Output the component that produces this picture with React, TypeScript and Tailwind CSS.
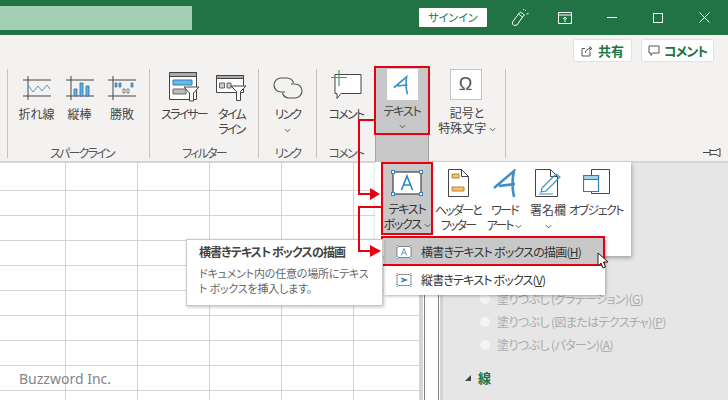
import type { ReactNode } from 'react'

const rows = Array.from({ length: 10 })
const cols = [66, 72, 72, 72, 72, 66]

function TextBoxIcon({ className, vertical }: { className: string; vertical?: boolean }) {
  return (
    <svg viewBox="0 0 32 26" className={className} fill="none">
      <rect x="2" y="2" width="28" height="22" fill="#fff" stroke="#444" strokeWidth="1.2" />
      {[[2, 2], [30, 2], [2, 24], [30, 24]].map(([x, y]) => (
        <rect key={`${x}-${y}`} x={x - 1.5} y={y - 1.5} width="3" height="3" fill="#fff" stroke="#2e88c4" strokeWidth="1" />
      ))}
      {vertical ? (
        <path d="M10 9l11 4-11 4M12 13h6" stroke="#2e88c4" strokeWidth="2.4" />
      ) : (
        <path d="M10.500 20l5.500-14 5.500 14M12.500 15h7" stroke="#2e88c4" strokeWidth="1.600" />
      )}
    </svg>
  )
}

function Chevron() {
  return (
    <svg viewBox="0 0 8 5" className="inline-block w-[7px] h-[5px]" fill="none">
      <path d="M1 1l3 3 3-3" stroke="#444" strokeWidth="1" />
    </svg>
  )
}

// kana in the reference is set much tighter than Noto's
function Kana({ children }: { children: ReactNode }) {
  return <span className="tracking-[-1.8px]">{children}</span>
}

function RibbonButton({
  width,
  icon,
  lines,
}: {
  width: number
  icon: ReactNode
  lines: ReactNode[]
}) {
  return (
    <div className="flex flex-col items-center shrink-0" style={{ width }}>
      <div className="h-[37px] w-full flex items-center justify-center">{icon}</div>
      {lines.map((l, i) => (
        <div key={i} className="leading-[15px] whitespace-nowrap">
          {l}
        </div>
      ))}
    </div>
  )
}

function Group({
  width,
  label,
  children,
  className = '',
}: {
  width: number
  label: string
  children: ReactNode
  className?: string
}) {
  return (
    <div className={`h-[89px] border-r border-[#c4c4c4] shrink-0 ${className}`} style={{ width }}>
      <div className="h-[77px] flex">{children}</div>
      <div className="text-center leading-[14px] text-[#555]">
        <Kana>{label}</Kana>
      </div>
    </div>
  )
}

function Radio({ label, hot }: { label: string; hot: string }) {
  return (
    <div className="h-[23px] flex items-center gap-[7px]">
      <span className="w-[10px] h-[10px] rounded-full bg-[#f4f4f4]" />
      <span className="tracking-[-0.6px]">
        {label}(<span className="underline">{hot}</span>)
      </span>
    </div>
  )
}

const sparkAxes = (
  <>
    <path d="M5 0v24M0 4h28M0 20h28" stroke="#444" strokeWidth="1" />
  </>
)

export default function App() {
  return (
    <div className="relative w-[728px] h-[400px] overflow-hidden flex flex-col bg-white text-[12px] text-[#444] font-['Noto_Sans_CJK_JP',sans-serif] [font-feature-settings:'palt']">
      {/* Title bar */}
      <div className="h-[35px] bg-[#217346] flex items-center shrink-0">
        <div className="w-[192px] h-[24px] bg-[#a3cfb4]" />
        <div className="ml-[227px] w-[68px] h-[19px] bg-white rounded-[1px] text-[11px] leading-[19px] text-center text-[#217346]">
          サインイン
        </div>
        <svg viewBox="0 0 18 18" className="ml-[24px] w-[18px] h-[18px]" fill="none" stroke="#fff" strokeWidth="1">
          <path d="M1.5 13l6-8 4 3-5.5 8-3 .5-1.5-1.5zM7.5 5l2-2 4 3-2 2M14 2l1-1M15.5 5l2-.5M12.5 1l.5-1" />
        </svg>
        <svg viewBox="0 0 14 12" className="ml-[29px] w-[14px] h-[12px]" fill="none" stroke="#fff" strokeWidth="1">
          <path d="M.5.5h13v11H.5zM.5 3h13M7 10V5M5 7l2-2 2 2" />
        </svg>
        <div className="ml-[35px] w-[10px] h-px bg-white" />
        <div className="ml-[36px] w-[10px] h-[10px] border border-white" />
        <svg viewBox="0 0 11 11" className="ml-[36px] w-[11px] h-[11px]" stroke="#fff" strokeWidth="1">
          <path d="M.5.5l10 10M10.5.5l-10 10" />
        </svg>
      </div>

      {/* Ribbon */}
      <div className="relative h-[128px] shrink-0 bg-[#f3f2f1] border-b-[2px] border-[#d4d4d4]">
        <div className="h-[34px] flex justify-end items-start gap-[9px] pt-[4px] pr-[14px]">
          <div className="w-[59px] h-[23px] bg-white border border-[#e4e2e0] rounded-[2px] flex items-center justify-center gap-[5px] font-bold text-[13px] text-[#217346]">
            <svg viewBox="0 0 12 12" className="w-[12px] h-[12px]" fill="none" stroke="#555" strokeWidth="1">
              <path d="M9 6.5v4.5H1V3.5h3M4.5 8c0-3 2-4.5 5-4.5M8 1.5l3 2-3 2" />
            </svg>
            共有
          </div>
          <div className="w-[73px] h-[23px] bg-white border border-[#e4e2e0] rounded-[2px] flex items-center justify-center gap-[4px] font-bold text-[13px] text-[#217346]">
            <svg viewBox="0 0 12 12" className="w-[12px] h-[12px]" fill="none" stroke="#555" strokeWidth="1">
              <path d="M1 1h10v7H4.5L3 10.500V8H1z" />
            </svg>
            <span className="tracking-[-1px]">コメント</span>
          </div>
        </div>
        <div className="flex pl-[7px]">
          <Group width={143} label="スパークライン" className="border-l pl-[7px]">
            <RibbonButton
              width={43}
              lines={['折れ線']}
              icon={
                <svg viewBox="0 0 28 24" className="w-[28px] h-[24px]" fill="none">
                  {sparkAxes}
                  <path d="M5 9l5 7 5-6 4 5 5-6 3 4" stroke="#4a9cc9" strokeWidth="1" />
                </svg>
              }
            />
            <RibbonButton
              width={43}
              lines={['縦棒']}
              icon={
                <svg viewBox="0 0 28 24" className="w-[28px] h-[24px]">
                  {sparkAxes}
                  <path d="M8 13h3v7H8zM14 7h3v13h-3zM20 10h3v10h-3z" fill="#5fb2e6" stroke="#2b6f9e" strokeWidth=".8" />
                </svg>
              }
            />
            <RibbonButton
              width={42}
              lines={['勝敗']}
              icon={
                <svg viewBox="0 0 28 24" className="w-[28px] h-[24px]">
                  {sparkAxes}
                  <path d="M7 7h2v4H7zM11 7h2v4h-2zM23 7h2v4h-2z" fill="#5fb2e6" stroke="#2b6f9e" strokeWidth=".7" />
                  <path d="M15 13h2v4h-2zM19 13h2v4h-2z" fill="#fff" stroke="#555" strokeWidth=".7" />
                </svg>
              }
            />
          </Group>
          <Group width={109} label="フィルター">
            <div className="w-[10px] shrink-0" />
            <RibbonButton
              width={48}
              lines={[<Kana key="s">スライサー</Kana>]}
              icon={
                <svg viewBox="0 0 31 31" className="w-[31px] h-[31px]">
                  <path d="M.5.5h27v27H.5z" fill="#fff" stroke="#444" />
                  <path d="M.5.5h27v4H.5z" fill="#aaa" stroke="#444" />
                  <path d="M4 8h19v5H4z" fill="#6cb6e8" stroke="#2b7fb5" />
                  <path d="M4 17h13v5H4z" fill="#bbb" stroke="#666" />
                  <path d="M15 15h15l-5.500 6v8h-4v-8z" fill="#fff" stroke="#444" />
                </svg>
              }
            />
            <RibbonButton
              width={47}
              lines={[<Kana key="t">タイム</Kana>, <Kana key="l">ライン</Kana>]}
              icon={
                <svg viewBox="0 0 31 26" className="w-[31px] h-[26px]">
                  <path d="M.5.5h27v17H.5z" fill="#fff" stroke="#444" />
                  <path d="M.5.5h27v3H.5z" fill="#aaa" stroke="#444" />
                  <path d="M3.500 8h5v5h-5zM11 8h4v5h-4z" fill="#ccc" stroke="#666" />
                  <path d="M15 11h15l-5.500 5.500v9h-4v-9z" fill="#fff" stroke="#444" />
                </svg>
              }
            />
          </Group>
          <Group width={58} label="リンク">
            <RibbonButton
              width={57}
              lines={[<Kana key="r">リンク</Kana>, <Chevron key="c" />]}
              icon={
                <svg viewBox="0 0 30 22" className="w-[30px] h-[22px]" fill="none" stroke="#555" strokeWidth="1.200">
                  <path d="M12 15H8a7 7 0 010-14h6a7 7 0 016.500 5" />
                  <path d="M18 7h4a7 7 0 010 14h-6a7 7 0 01-6.500-5" />
                </svg>
              }
            />
          </Group>
          <div className="h-[89px] w-[58px] shrink-0">
            <div className="h-[77px] flex">
              <RibbonButton
                width={58}
                lines={[<Kana key="k">コメント</Kana>]}
                icon={
                  <svg viewBox="0 0 32 30" className="w-[32px] h-[30px] -mt-[6px]" fill="none">
                    <path d="M5 4.500h26v19H11l-4 5v-5H5z" fill="#fff" stroke="#444" />
                    <path d="M9 0v16M1 7.500h16" stroke="#4c9a58" strokeWidth="1.200" />
                  </svg>
                }
              />
            </div>
            <div className="text-center leading-[14px] text-[#555]">
              <Kana>コメント</Kana>
            </div>
          </div>

          {/* active Text button, grey down to the ribbon edge */}
          <div className="relative w-[54px] h-[96px] -mt-[2px] shrink-0 bg-[#c8c8c8] border-x border-[#a4a4a4] flex flex-col items-center">
            <div className="mt-[2px] w-[31px] h-[31px] bg-white flex items-center justify-center">
              <svg viewBox="0 0 24 24" className="w-[22px] h-[22px]" fill="none">
                <path d="M3 15L17 3c-1 6-1 12 1 19M7 13l11-1" stroke="#3f8fc7" strokeWidth="1.800" />
              </svg>
            </div>
            <div className="mt-[3px] leading-[15px] tracking-[-1.2px]">テキスト</div>
            <div className="leading-[13px]">
              <Chevron />
            </div>
            <div className="absolute -left-[2px] -right-[2px] -top-px h-[69px] border-[2px] border-[#e60012]" />
          </div>
          <div className="h-[89px] w-[77px] shrink-0 border-r border-[#c4c4c4]">
            <div className="flex justify-center pr-[3px]">
              <div className="w-[32px] h-[31px] bg-white border border-[#c4c4c4] flex items-center justify-center text-[18px] text-[#555] font-['Liberation_Sans',sans-serif]">
                Ω
              </div>
            </div>
            <div className="mt-[5px] text-center leading-[15px] whitespace-nowrap">記号と</div>
            <div className="text-center leading-[15px] whitespace-nowrap">
              特殊文字 <Chevron />
            </div>
          </div>
        </div>
        <svg viewBox="0 0 18 9" className="absolute right-[7px] bottom-[4px] w-[18px] h-[9px]" fill="none" stroke="#444" strokeWidth="1">
          <path d="M0 4.500h7M7 1v7M7 2.500h6l4-2v8l-4-2H7" />
        </svg>
      </div>

      {/* Sheet + side pane */}
      <div className="flex-1 flex min-h-0">
        <div className="w-[420px] shrink-0 overflow-hidden">
          {rows.map((_, r) => (
            <div key={r} className={`flex border-b border-[#d4d4d4] ${r === 0 ? 'h-[28px]' : 'h-[25px]'}`}>
              {cols.map((w, c) => (
                <div key={c} className="border-r border-[#d4d4d4] shrink-0" style={{ width: w }} />
              ))}
            </div>
          ))}
        </div>
        <div className="w-[3px] bg-[#d4d4d4] shrink-0" />
        <div className="w-px bg-white shrink-0" />
        <div className="w-[15px] bg-white border-x border-[#808080] shrink-0" />
        <div className="w-px bg-white shrink-0" />
        <div className="w-[3px] bg-[#d4d4d4] shrink-0" />
        <div className="flex-1 bg-[#e6e6e6] pt-[124px] pl-[37px] text-[#ababab]">
          <Radio label="塗りつぶし (グラデーション)" hot="G" />
          <Radio label="塗りつぶし (図またはテクスチャ)" hot="P" />
          <Radio label="塗りつぶし (パターン)" hot="A" />
          <div className="mt-[12px] -ml-[15px] flex items-center gap-[7px] font-bold text-[13px] text-[#217346]">
            <span className="w-0 h-0 border-l-[6px] border-l-transparent border-b-[6px] border-b-[#444]" />
            線
          </div>
        </div>
      </div>

      {/* Watermark */}
      <div className="absolute left-[19px] top-[370px] text-[14px] leading-[18px] text-[#858585] font-['Noto_Sans',sans-serif]">
        Buzzword Inc.
      </div>

      {/* Insert > Text gallery */}
      <div className="absolute left-[375px] top-[162px] w-[256px] h-[94px] bg-white shadow-[1px_2px_4px_rgba(0,0,0,0.3)] flex pl-[6px]">
        <div className="relative w-[52px] h-[73px] shrink-0 bg-[#c8c8c8] border-[2px] border-[#e60012] flex flex-col items-center">
          <div className="h-[37px] flex items-center">
            <TextBoxIcon className="w-[32px] h-[26px]" />
          </div>
          <div className="leading-[15px] text-[#333] whitespace-nowrap tracking-[-1.2px]">テキスト</div>
          <div className="leading-[15px] text-[#333] whitespace-nowrap">
            <span className="tracking-[-1.2px]">ボックス</span> <Chevron />
          </div>
        </div>
        <div className="flex pt-[3px]">
          <RibbonButton
            width={50}
            lines={[<Kana key="h">ヘッダーと</Kana>, <Kana key="f">フッター</Kana>]}
            icon={
              <svg viewBox="0 0 21 28" className="w-[21px] h-[28px] -mt-[1px]" fill="none">
                <path d="M.5.500h13l7 7v20H.5z" fill="#fff" stroke="#444" />
                <path d="M13.500.500v7h7" stroke="#444" />
                <path d="M4 5h7v4H4zM4 18h12v4H4z" fill="#f4c272" stroke="#b8862f" />
              </svg>
            }
          />
          <RibbonButton
            width={43}
            lines={[
              <Kana key="w">ワード</Kana>,
              <span key="a">
                <Kana>アート</Kana> <Chevron />
              </span>,
            ]}
            icon={
              <svg viewBox="0 0 24 29" className="w-[24px] h-[29px] -mt-[1px]" fill="none">
                <path d="M1 19L21 2c-2 8-2 17 0 26M6 17l16-2" stroke="#3f8fc7" strokeWidth="2.600" />
              </svg>
            }
          />
          <RibbonButton
            width={44}
            lines={['署名欄', <Chevron key="c" />]}
            icon={
              <svg viewBox="0 0 27 29" className="w-[27px] h-[29px] -mt-[1px]" fill="none">
                <path d="M.5.500h15l7 7v20H.5z" fill="#fff" stroke="#444" />
                <path d="M15.500.500v7h7" stroke="#444" />
                <path d="M7 19L21 5l4 3-14 14-5 1zM4 25h14" stroke="#3f8fc7" strokeWidth="1.200" />
              </svg>
            }
          />
          <RibbonButton
            width={52}
            lines={[<span key="o" className="tracking-[-1.5px]">オブジェクト</span>]}
            icon={
              <svg viewBox="0 0 27 28" className="w-[27px] h-[28px] -mt-[1px]" fill="none">
                <path d="M8.500.500h18v24h-18z" fill="#fff" stroke="#444" />
                <path d="M.5 6.500h15v16H.5z" fill="#fff" stroke="#2e7fa8" strokeWidth="1.200" />
                <path d="M.5 6.500h15v4H.5z" fill="#9fd0ec" stroke="#2e7fa8" strokeWidth="1.200" />
              </svg>
            }
          />
        </div>
      </div>

      {/* Text box submenu */}
      <div className="absolute left-[384px] top-[238px] w-[221px] h-[57px] bg-white shadow-[1px_1px_3px_rgba(0,0,0,0.3)]">
        <div className="relative h-[27px] bg-[#c8c8c8] flex items-center pl-[12px] gap-[9px] text-[#333]">
          <TextBoxIcon className="w-[16px] h-[14px]" />
          <span className="tracking-[-0.75px]">
            横書きテキスト ボックスの描画(<span className="underline">H</span>)
          </span>
          <div className="absolute -left-[3px] right-0 -top-[2px] -bottom-px border-[2px] border-[#e60012]" />
        </div>
        <div className="h-[30px] flex items-center pl-[12px] gap-[9px] text-[#333]">
          <TextBoxIcon vertical className="w-[16px] h-[14px]" />
          <span className="tracking-[-0.8px]">
            縦書きテキスト ボックス(<span className="underline">V</span>)
          </span>
        </div>
      </div>

      {/* Tooltip */}
      <div className="absolute left-[186px] top-[239px] w-[197px] h-[67px] bg-white border border-[#c8c8c8] shadow-[1px_1px_3px_rgba(0,0,0,0.25)] pl-[12px] pr-[8px] pt-[4px]">
        <div className="font-bold leading-[16px] text-[#444] tracking-[-0.9px]">横書きテキスト ボックスの描画</div>
        <div className="mt-[6px] text-[11px] leading-[15px] text-[#666] tracking-[-0.2px]">
          ドキュメント内の任意の場所にテキス
          <br />
          ト ボックスを挿入します。
        </div>
      </div>

      {/* Annotation arrows */}
      <svg viewBox="0 0 40 150" className="absolute left-[350px] top-[110px] w-[40px] h-[150px] pointer-events-none" fill="none">
        <path d="M26 10H9v74h12M31 97H9v44h12" stroke="#e60012" strokeWidth="2" />
        <path d="M20 78l10 6-10 6zM20 135l11 6-11 6z" fill="#e60012" />
      </svg>

      {/* Mouse cursor */}
      <svg viewBox="0 0 12 18" className="absolute left-[597px] top-[252px] w-[12px] h-[18px]">
        <path d="M1 1v13l3-3 2 5 2.500-1-2-5h4.500z" fill="#fff" stroke="#222" strokeWidth="1" />
      </svg>
    </div>
  )
}
